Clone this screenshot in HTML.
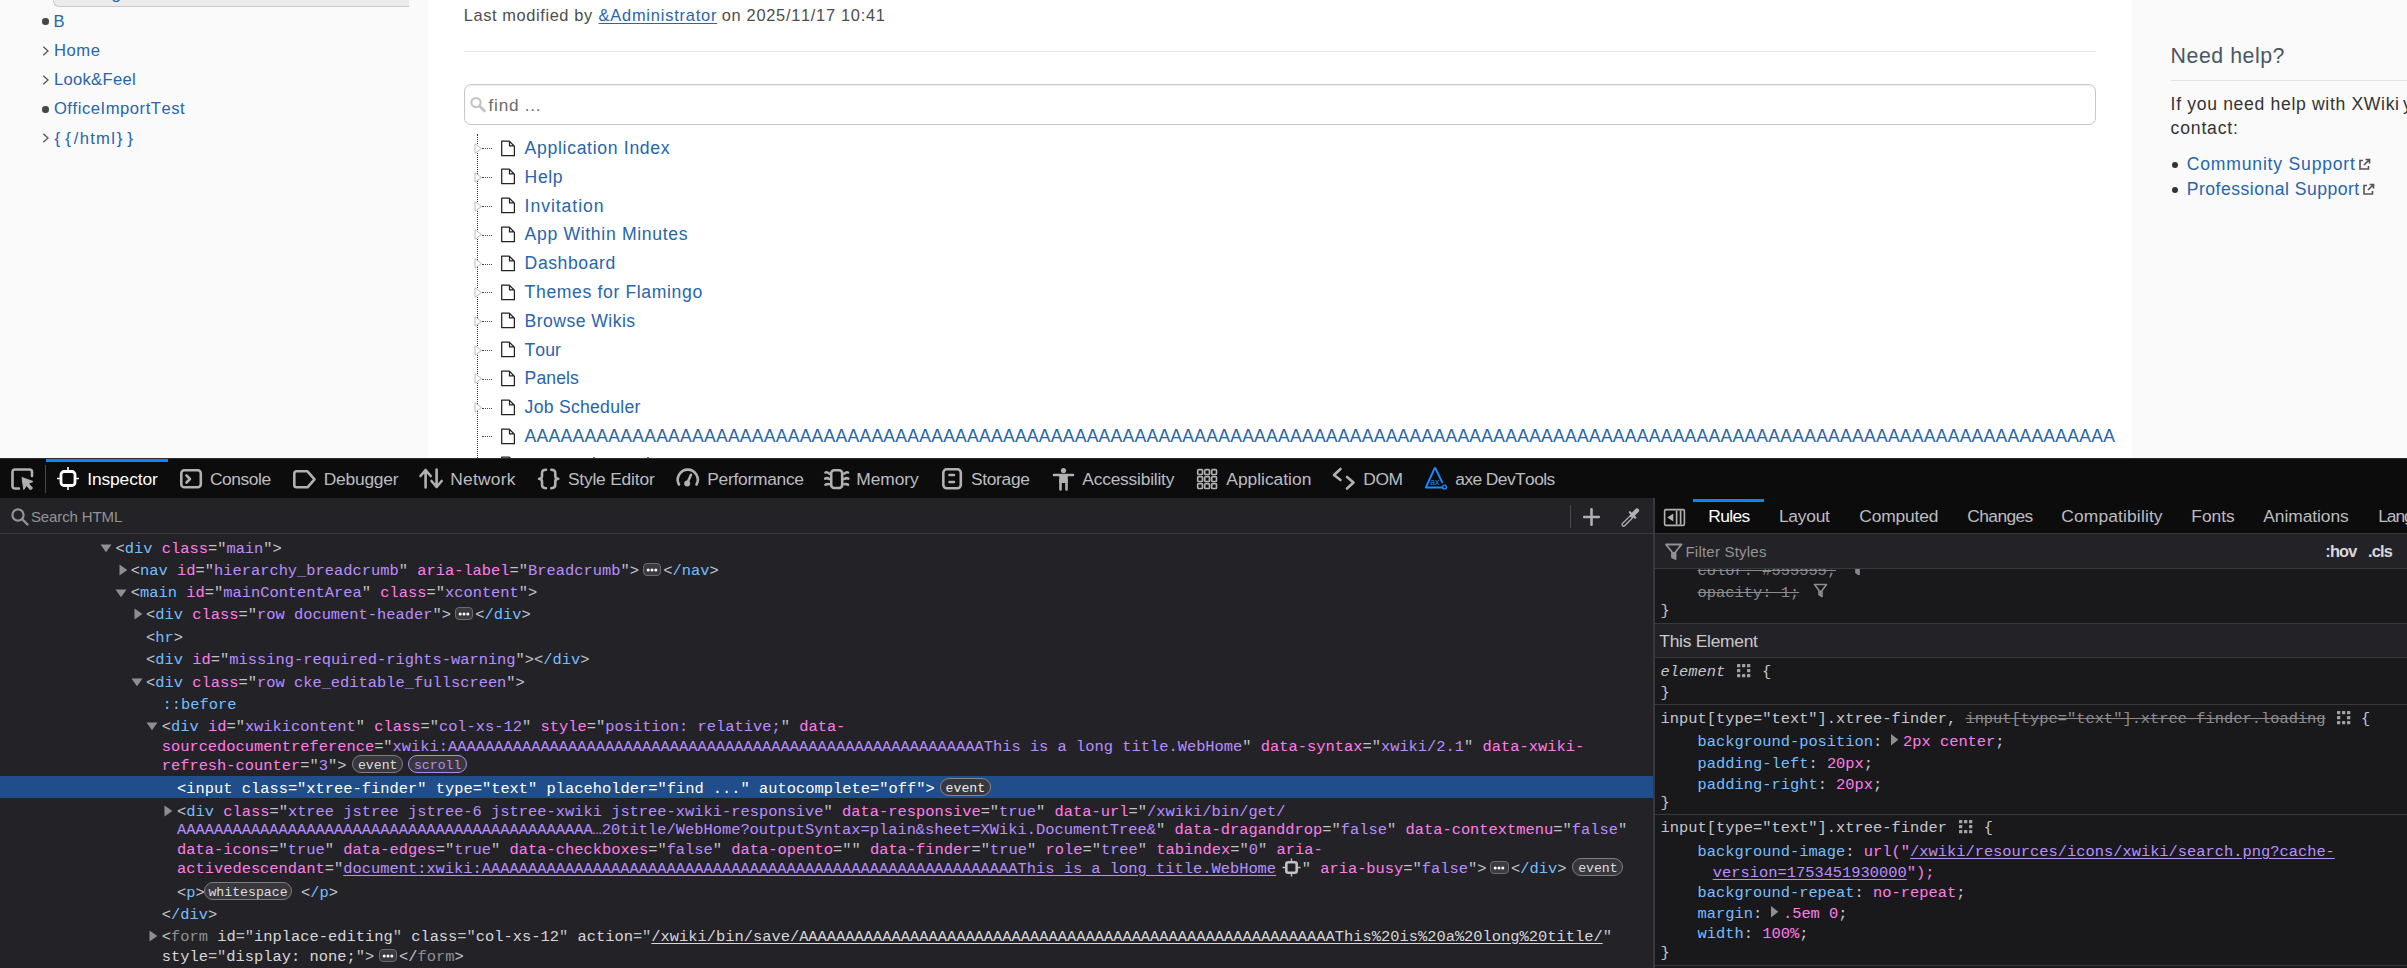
<!DOCTYPE html>
<html><head><meta charset="utf-8"><title>XWiki</title><style>
html,body{margin:0;padding:0;width:2407px;height:968px;overflow:hidden;background:#fff}
body{position:relative;font-family:"Liberation Sans",sans-serif;font-kerning:none}
.s{position:absolute;white-space:pre;line-height:30px;font-family:"Liberation Sans",sans-serif}
.m{position:absolute;white-space:pre;line-height:30px;font-family:"Liberation Mono",monospace;color:#c2c2c6}
svg{overflow:visible}
</style></head><body>
<div style="position:absolute;left:0px;top:0px;width:428px;height:458px;background:#fafafa"></div>
<div style="position:absolute;left:428px;top:0px;width:1704px;height:458px;background:#fff"></div>
<div style="position:absolute;left:2132px;top:0px;width:275px;height:458px;background:#fafafa"></div>
<div style="position:absolute;left:53px;top:-8px;width:355px;height:13px;background:#ebebeb;border:1px solid #c9c9c9;border-right:none;border-radius:0 0 0 6px"></div>
<div class="s" id="t1" style="left:111.50px;top:-21.00px;font-size:17px;color:#2865ab;">g</div>
<div style="position:absolute;left:42px;top:18.4px;width:6.5px;height:6.5px;background:#474747;border-radius:50%"></div>
<div class="s" id="t2" style="left:53.60px;top:7.00px;font-size:16.6px;color:#2865ab;">B</div>
<svg style="position:absolute;left:41px;top:44.6px" width="10" height="12"><polyline points="2.3,1.8 7,6 2.3,10.2" fill="none" stroke="#555" stroke-width="1.3"/></svg>
<div class="s" id="t3" style="left:53.90px;top:36.00px;font-size:16.6px;color:#2865ab;letter-spacing:0.634px;">Home</div>
<svg style="position:absolute;left:41px;top:73.9px" width="10" height="12"><polyline points="2.3,1.8 7,6 2.3,10.2" fill="none" stroke="#555" stroke-width="1.3"/></svg>
<div class="s" id="t4" style="left:53.90px;top:65.00px;font-size:16.6px;color:#2865ab;letter-spacing:0.306px;">Look&amp;Feel</div>
<div style="position:absolute;left:42px;top:106.1px;width:6.5px;height:6.5px;background:#474747;border-radius:50%"></div>
<div class="s" id="t5" style="left:53.90px;top:94.00px;font-size:16.6px;color:#2865ab;letter-spacing:0.547px;">OfficeImportTest</div>
<svg style="position:absolute;left:41px;top:132.3px" width="10" height="12"><polyline points="2.3,1.8 7,6 2.3,10.2" fill="none" stroke="#555" stroke-width="1.3"/></svg>
<div class="s" id="t6" style="left:54.60px;top:123.00px;font-size:17.200000000000003px;color:#2865ab;">{</div>
<div class="s" id="t7" style="left:65.20px;top:123.00px;font-size:17.200000000000003px;color:#2865ab;">{</div>
<div class="s" id="t8" style="left:116.80px;top:123.00px;font-size:17.200000000000003px;color:#2865ab;">}</div>
<div class="s" id="t9" style="left:127.20px;top:123.00px;font-size:17.200000000000003px;color:#2865ab;">}</div>
<div class="s" id="t10" style="left:73.80px;top:124.00px;font-size:16.6px;color:#2865ab;letter-spacing:1.286px;">/html</div>
<div class="s" id="t11" style="left:463.80px;top:0.00px;font-size:16.4px;color:#4d4d4d;letter-spacing:0.600px;">Last modified by </div>
<div class="s" id="t12" style="left:598.50px;top:0.00px;font-size:16.4px;color:#2865ab;letter-spacing:0.801px;text-decoration:underline;text-underline-offset:2px;">&amp;Administrator</div>
<div class="s" id="t13" style="left:721.70px;top:0.00px;font-size:16.4px;color:#4d4d4d;letter-spacing:0.711px;">on 2025/11/17 10:41</div>
<div style="position:absolute;left:464px;top:51px;width:1632px;height:1px;background:#e6e6e6"></div>
<div style="position:absolute;left:464px;top:84px;width:1630px;height:39px;border:1px solid #c8c8c8;border-radius:7px;box-shadow:inset 0 1px 1px rgba(0,0,0,.08);background:#fff"></div>
<svg style="position:absolute;left:469px;top:96px" width="18" height="17"><circle cx="7" cy="6.5" r="4.6" fill="none" stroke="#c2c2c2" stroke-width="2"/><line x1="10.5" y1="10" x2="15.5" y2="15" stroke="#c2c2c2" stroke-width="2.6" stroke-linecap="round"/></svg>
<div class="s" id="t14" style="left:488.60px;top:90.00px;font-size:17.2px;color:#6b6b6b;letter-spacing:0.723px;">find ...</div>
<div style="position:absolute;left:477px;top:134px;width:0;height:324px;border-left:1px dotted #333"></div>
<svg style="position:absolute;left:474px;top:143.0px" width="9" height="11"><polygon points="1,0.8 7.5,5.5 1,10.2" fill="#fff" stroke="#bdbdbd" stroke-width="1"/></svg>
<div style="position:absolute;left:482px;top:148px;width:10px;height:0;border-top:1px dotted #444"></div>
<svg style="position:absolute;left:500px;top:138.5px" width="17" height="19"><path d="M1.7,2.1 H9.3 L14.4,7.2 V16.7 H1.7 Z M9.5,2.1 V6.9 H14.4" fill="#fff" stroke="#222" stroke-width="1.25" stroke-linejoin="round"/></svg>
<div class="s" id="t15" style="left:524.60px;top:133.00px;font-size:17.6px;color:#2865ab;letter-spacing:0.688px;">Application Index</div>
<svg style="position:absolute;left:474px;top:171.8px" width="9" height="11"><polygon points="1,0.8 7.5,5.5 1,10.2" fill="#fff" stroke="#bdbdbd" stroke-width="1"/></svg>
<div style="position:absolute;left:482px;top:177px;width:10px;height:0;border-top:1px dotted #444"></div>
<svg style="position:absolute;left:500px;top:167.3px" width="17" height="19"><path d="M1.7,2.1 H9.3 L14.4,7.2 V16.7 H1.7 Z M9.5,2.1 V6.9 H14.4" fill="#fff" stroke="#222" stroke-width="1.25" stroke-linejoin="round"/></svg>
<div class="s" id="t16" style="left:524.60px;top:162.00px;font-size:17.6px;color:#2865ab;letter-spacing:0.578px;">Help</div>
<svg style="position:absolute;left:474px;top:200.6px" width="9" height="11"><polygon points="1,0.8 7.5,5.5 1,10.2" fill="#fff" stroke="#bdbdbd" stroke-width="1"/></svg>
<div style="position:absolute;left:482px;top:206px;width:10px;height:0;border-top:1px dotted #444"></div>
<svg style="position:absolute;left:500px;top:196.1px" width="17" height="19"><path d="M1.7,2.1 H9.3 L14.4,7.2 V16.7 H1.7 Z M9.5,2.1 V6.9 H14.4" fill="#fff" stroke="#222" stroke-width="1.25" stroke-linejoin="round"/></svg>
<div class="s" id="t17" style="left:524.60px;top:191.00px;font-size:17.6px;color:#2865ab;letter-spacing:0.948px;">Invitation</div>
<svg style="position:absolute;left:474px;top:229.4px" width="9" height="11"><polygon points="1,0.8 7.5,5.5 1,10.2" fill="#fff" stroke="#bdbdbd" stroke-width="1"/></svg>
<div style="position:absolute;left:482px;top:235px;width:10px;height:0;border-top:1px dotted #444"></div>
<svg style="position:absolute;left:500px;top:224.9px" width="17" height="19"><path d="M1.7,2.1 H9.3 L14.4,7.2 V16.7 H1.7 Z M9.5,2.1 V6.9 H14.4" fill="#fff" stroke="#222" stroke-width="1.25" stroke-linejoin="round"/></svg>
<div class="s" id="t18" style="left:524.60px;top:219.00px;font-size:17.6px;color:#2865ab;letter-spacing:0.668px;">App Within Minutes</div>
<svg style="position:absolute;left:474px;top:258.2px" width="9" height="11"><polygon points="1,0.8 7.5,5.5 1,10.2" fill="#fff" stroke="#bdbdbd" stroke-width="1"/></svg>
<div style="position:absolute;left:482px;top:264px;width:10px;height:0;border-top:1px dotted #444"></div>
<svg style="position:absolute;left:500px;top:253.7px" width="17" height="19"><path d="M1.7,2.1 H9.3 L14.4,7.2 V16.7 H1.7 Z M9.5,2.1 V6.9 H14.4" fill="#fff" stroke="#222" stroke-width="1.25" stroke-linejoin="round"/></svg>
<div class="s" id="t19" style="left:524.60px;top:248.00px;font-size:17.6px;color:#2865ab;letter-spacing:0.580px;">Dashboard</div>
<svg style="position:absolute;left:474px;top:287.0px" width="9" height="11"><polygon points="1,0.8 7.5,5.5 1,10.2" fill="#fff" stroke="#bdbdbd" stroke-width="1"/></svg>
<div style="position:absolute;left:482px;top:292px;width:10px;height:0;border-top:1px dotted #444"></div>
<svg style="position:absolute;left:500px;top:282.5px" width="17" height="19"><path d="M1.7,2.1 H9.3 L14.4,7.2 V16.7 H1.7 Z M9.5,2.1 V6.9 H14.4" fill="#fff" stroke="#222" stroke-width="1.25" stroke-linejoin="round"/></svg>
<div class="s" id="t20" style="left:524.60px;top:277.00px;font-size:17.6px;color:#2865ab;letter-spacing:0.635px;">Themes for Flamingo</div>
<svg style="position:absolute;left:474px;top:315.8px" width="9" height="11"><polygon points="1,0.8 7.5,5.5 1,10.2" fill="#fff" stroke="#bdbdbd" stroke-width="1"/></svg>
<div style="position:absolute;left:482px;top:321px;width:10px;height:0;border-top:1px dotted #444"></div>
<svg style="position:absolute;left:500px;top:311.3px" width="17" height="19"><path d="M1.7,2.1 H9.3 L14.4,7.2 V16.7 H1.7 Z M9.5,2.1 V6.9 H14.4" fill="#fff" stroke="#222" stroke-width="1.25" stroke-linejoin="round"/></svg>
<div class="s" id="t21" style="left:524.60px;top:306.00px;font-size:17.6px;color:#2865ab;letter-spacing:0.452px;">Browse Wikis</div>
<svg style="position:absolute;left:474px;top:344.6px" width="9" height="11"><polygon points="1,0.8 7.5,5.5 1,10.2" fill="#fff" stroke="#bdbdbd" stroke-width="1"/></svg>
<div style="position:absolute;left:482px;top:350px;width:10px;height:0;border-top:1px dotted #444"></div>
<svg style="position:absolute;left:500px;top:340.1px" width="17" height="19"><path d="M1.7,2.1 H9.3 L14.4,7.2 V16.7 H1.7 Z M9.5,2.1 V6.9 H14.4" fill="#fff" stroke="#222" stroke-width="1.25" stroke-linejoin="round"/></svg>
<div class="s" id="t22" style="left:524.60px;top:335.00px;font-size:17.6px;color:#2865ab;letter-spacing:0.003px;">Tour</div>
<svg style="position:absolute;left:474px;top:373.4px" width="9" height="11"><polygon points="1,0.8 7.5,5.5 1,10.2" fill="#fff" stroke="#bdbdbd" stroke-width="1"/></svg>
<div style="position:absolute;left:482px;top:379px;width:10px;height:0;border-top:1px dotted #444"></div>
<svg style="position:absolute;left:500px;top:368.9px" width="17" height="19"><path d="M1.7,2.1 H9.3 L14.4,7.2 V16.7 H1.7 Z M9.5,2.1 V6.9 H14.4" fill="#fff" stroke="#222" stroke-width="1.25" stroke-linejoin="round"/></svg>
<div class="s" id="t23" style="left:524.60px;top:363.00px;font-size:17.6px;color:#2865ab;letter-spacing:0.101px;">Panels</div>
<svg style="position:absolute;left:474px;top:402.2px" width="9" height="11"><polygon points="1,0.8 7.5,5.5 1,10.2" fill="#fff" stroke="#bdbdbd" stroke-width="1"/></svg>
<div style="position:absolute;left:482px;top:408px;width:10px;height:0;border-top:1px dotted #444"></div>
<svg style="position:absolute;left:500px;top:397.7px" width="17" height="19"><path d="M1.7,2.1 H9.3 L14.4,7.2 V16.7 H1.7 Z M9.5,2.1 V6.9 H14.4" fill="#fff" stroke="#222" stroke-width="1.25" stroke-linejoin="round"/></svg>
<div class="s" id="t24" style="left:524.60px;top:392.00px;font-size:17.6px;color:#2865ab;letter-spacing:0.270px;">Job Scheduler</div>
<div style="position:absolute;left:482px;top:436px;width:10px;height:0;border-top:1px dotted #444"></div>
<svg style="position:absolute;left:500px;top:426.5px" width="17" height="19"><path d="M1.7,2.1 H9.3 L14.4,7.2 V16.7 H1.7 Z M9.5,2.1 V6.9 H14.4" fill="#fff" stroke="#222" stroke-width="1.25" stroke-linejoin="round"/></svg>
<div class="s" id="t25" style="left:524.60px;top:421.00px;font-size:17.6px;color:#2865ab;letter-spacing:0.224px;">AAAAAAAAAAAAAAAAAAAAAAAAAAAAAAAAAAAAAAAAAAAAAAAAAAAAAAAAAAAAAAAAAAAAAAAAAAAAAAAAAAAAAAAAAAAAAAAAAAAAAAAAAAAAAAAAAAAAAAAAAAAAAAAAAAAAA</div>
<div style="position:absolute;left:482px;top:465px;width:10px;height:0;border-top:1px dotted #444"></div>
<svg style="position:absolute;left:500px;top:455.3px" width="17" height="19"><path d="M1.7,2.1 H9.3 L14.4,7.2 V16.7 H1.7 Z M9.5,2.1 V6.9 H14.4" fill="#fff" stroke="#222" stroke-width="1.25" stroke-linejoin="round"/></svg>
<div class="s" id="t26" style="left:524.60px;top:450.00px;font-size:17.6px;color:#2865ab;letter-spacing:2.070px;">AAAAAAAAAAAAAAAAAAAA</div>
<div style="position:absolute;left:593px;top:456.5px;width:1.6px;height:1.6px;background:#2865ab;border-radius:50%"></div>
<div style="position:absolute;left:647px;top:456.5px;width:1.6px;height:1.6px;background:#2865ab;border-radius:50%"></div>
<div class="s" id="t27" style="left:2170.60px;top:41.00px;font-size:21.3px;color:#4a5663;letter-spacing:0.545px;">Need help?</div>
<div style="position:absolute;left:2171px;top:80px;width:236px;height:1px;background:#e3e3e3"></div>
<div class="s" id="t28" style="left:2170.60px;top:89.00px;font-size:17.6px;color:#333;letter-spacing:0.662px;">If you need help with XWiki</div>
<div class="s" id="t29" style="left:2403.00px;top:89.00px;font-size:17.6px;color:#333;">you can</div>
<div class="s" id="t30" style="left:2170.60px;top:113.00px;font-size:17.6px;color:#333;letter-spacing:0.809px;">contact:</div>
<div style="position:absolute;left:2172px;top:161.5px;width:6.3px;height:6.3px;background:#333;border-radius:50%"></div>
<div class="s" id="t31" style="left:2186.80px;top:149.00px;font-size:17.6px;color:#2865ab;letter-spacing:0.789px;">Community Support</div>
<svg style="position:absolute;left:2358.0px;top:157.5px" width="13" height="13"><path d="M5,2.5 H2 V11 H10.5 V8" fill="none" stroke="#555" stroke-width="1.6"/><path d="M6,7 L11,2 M7.5,1.5 H11.5 V5.5" fill="none" stroke="#555" stroke-width="1.7"/></svg>
<div style="position:absolute;left:2172px;top:186.5px;width:6.3px;height:6.3px;background:#333;border-radius:50%"></div>
<div class="s" id="t32" style="left:2186.80px;top:174.00px;font-size:17.6px;color:#2865ab;letter-spacing:0.479px;">Professional Support</div>
<svg style="position:absolute;left:2362.0px;top:182.5px" width="13" height="13"><path d="M5,2.5 H2 V11 H10.5 V8" fill="none" stroke="#555" stroke-width="1.6"/><path d="M6,7 L11,2 M7.5,1.5 H11.5 V5.5" fill="none" stroke="#555" stroke-width="1.7"/></svg>
<div style="position:absolute;left:0px;top:458px;width:2407px;height:510px;background:#232327"></div>
<div style="position:absolute;left:0px;top:458px;width:2407px;height:40px;background:#0c0c0d"></div>
<div style="position:absolute;left:0px;top:458px;width:2407px;height:1px;background:#2b2b30"></div>
<div style="position:absolute;left:0px;top:498px;width:2407px;height:1px;background:#38383d"></div>
<div style="position:absolute;left:46px;top:459px;width:122px;height:3px;background:#0a84ff"></div>
<div style="position:absolute;left:45px;top:465px;width:1px;height:28px;background:#48484d"></div>
<div class="s" id="t33" style="left:87.30px;top:464.00px;font-size:17.4px;color:#ffffff;letter-spacing:-0.139px;">Inspector</div>
<div class="s" id="t34" style="left:210.00px;top:464.00px;font-size:17.4px;color:#bdbdc0;letter-spacing:-0.445px;">Console</div>
<div class="s" id="t35" style="left:323.80px;top:464.00px;font-size:17.4px;color:#bdbdc0;letter-spacing:-0.236px;">Debugger</div>
<div class="s" id="t36" style="left:450.30px;top:464.00px;font-size:17.4px;color:#bdbdc0;letter-spacing:0.231px;">Network</div>
<div class="s" id="t37" style="left:567.90px;top:464.00px;font-size:17.4px;color:#bdbdc0;letter-spacing:-0.195px;">Style Editor</div>
<div class="s" id="t38" style="left:707.30px;top:464.00px;font-size:17.4px;color:#bdbdc0;letter-spacing:-0.287px;">Performance</div>
<div class="s" id="t39" style="left:856.30px;top:464.00px;font-size:17.4px;color:#bdbdc0;letter-spacing:-0.069px;">Memory</div>
<div class="s" id="t40" style="left:970.90px;top:464.00px;font-size:17.4px;color:#bdbdc0;letter-spacing:-0.303px;">Storage</div>
<div class="s" id="t41" style="left:1082.30px;top:464.00px;font-size:17.4px;color:#bdbdc0;letter-spacing:-0.217px;">Accessibility</div>
<div class="s" id="t42" style="left:1226.30px;top:464.00px;font-size:17.4px;color:#bdbdc0;letter-spacing:-0.007px;">Application</div>
<div class="s" id="t43" style="left:1363.30px;top:464.00px;font-size:17.4px;color:#bdbdc0;letter-spacing:-0.393px;">DOM</div>
<div class="s" id="t44" style="left:1455.30px;top:464.00px;font-size:17.4px;color:#bdbdc0;letter-spacing:-0.577px;">axe DevTools</div>
<svg style="position:absolute;left:10px;top:467px" width="26" height="26" viewBox="0 0 26 26"><path d="M9,21.5 H5 Q2.5,21.5 2.5,19 V5 Q2.5,2.5 5,2.5 H19.5 Q22,2.5 22,5 V9" fill="none" stroke="#b1b1b3" stroke-width="2.6" stroke-linecap="round" stroke-linejoin="round"/><path d="M12,10.5 L23,14.5 L18.5,16.5 L22.5,21 L20.5,23 L16.5,18.5 L13.8,22.5 Z" fill="#b1b1b3" stroke="#b1b1b3" stroke-width="1" stroke-linejoin="round"/></svg>
<svg style="position:absolute;left:56px;top:466px" width="24" height="25" viewBox="0 0 24 25"><rect x="5" y="5.5" width="14" height="14" rx="3" fill="none" stroke="#fff" stroke-width="2.8"/><path d="M12,1 V5.5 M12,19.5 V24 M1,12.5 H5 M19,12.5 H23" stroke="#fff" stroke-width="1.6"/></svg>
<svg style="position:absolute;left:179px;top:468px" width="25" height="22" viewBox="0 0 25 22"><rect x="2.3" y="2.3" width="19.5" height="17" rx="3" fill="none" stroke="#b1b1b3" stroke-width="2.6" stroke-linecap="round" stroke-linejoin="round"/><path d="M7.5,7.5 L11,11 L7.5,14.5" fill="none" stroke="#b1b1b3" stroke-width="2.6" stroke-linecap="round" stroke-linejoin="round" stroke-width="2"/></svg>
<svg style="position:absolute;left:292px;top:469px" width="26" height="21" viewBox="0 0 26 21"><path d="M4.5,2.3 H15.5 L22.5,10.3 L15.5,18.3 H4.5 Q2.3,18.3 2.3,16 V4.6 Q2.3,2.3 4.5,2.3 Z" fill="none" stroke="#b1b1b3" stroke-width="2.6" stroke-linecap="round" stroke-linejoin="round"/></svg>
<svg style="position:absolute;left:419px;top:467px" width="25" height="23" viewBox="0 0 25 23"><path d="M6.6,20.5 V3 M1.5,9 L6.6,3 L11.7,9 M17.6,2.5 V20 M12.5,14 L17.6,20 L22.7,14" fill="none" stroke="#b1b1b3" stroke-width="2.6" stroke-linecap="round" stroke-linejoin="round" stroke-width="2.5"/></svg>
<svg style="position:absolute;left:537px;top:468px" width="25" height="22" viewBox="0 0 25 22"><path d="M9,1.7 Q5,1.7 5,5.2 V8.2 Q5,10.6 2,10.8 Q5,11 5,13.4 V16.6 Q5,20.2 9,20.2 M14.3,1.7 Q18.3,1.7 18.3,5.2 V8.2 Q18.3,10.6 21.3,10.8 Q18.3,11 18.3,13.4 V16.6 Q18.3,20.2 14.3,20.2" fill="none" stroke="#b1b1b3" stroke-width="2.6" stroke-linecap="round" stroke-linejoin="round" stroke-width="2.6"/></svg>
<svg style="position:absolute;left:675px;top:465px" width="26" height="24" viewBox="0 0 26 24"><path d="M4,19.5 A10,10 0 1 1 21.5,19.5" fill="none" stroke="#b1b1b3" stroke-width="2.6" stroke-linecap="round" stroke-linejoin="round"/><path d="M12.3,18 L16,9.8" fill="none" stroke="#b1b1b3" stroke-width="2.6" stroke-linecap="round" stroke-linejoin="round" stroke-width="1.7"/><circle cx="12.2" cy="18.6" r="3" fill="#b1b1b3"/></svg>
<svg style="position:absolute;left:824px;top:468px" width="26" height="22" viewBox="0 0 26 22"><rect x="7.2" y="2.2" width="11" height="17.8" rx="3" fill="none" stroke="#b1b1b3" stroke-width="2.6" stroke-linecap="round" stroke-linejoin="round"/><path d="M1.5,4.5 Q3,3.6 5.2,5.6 M1.2,10.6 Q3,9.4 5.2,11 M1.5,16.8 Q3,15.6 5.2,16.2 M24,4.5 Q22.5,3.6 20.3,5.6 M24.3,10.6 Q22.5,9.4 20.3,11 M24,16.8 Q22.5,15.6 20.3,16.2" fill="none" stroke="#b1b1b3" stroke-width="2.6" stroke-linecap="round" stroke-linejoin="round" stroke-width="1.6"/></svg>
<svg style="position:absolute;left:941px;top:467px" width="23" height="24" viewBox="0 0 23 24"><rect x="2.3" y="2.3" width="17.5" height="19" rx="3.5" fill="none" stroke="#b1b1b3" stroke-width="2.6" stroke-linecap="round" stroke-linejoin="round"/><path d="M8.5,8 H13 M8.5,15 H13" fill="none" stroke="#b1b1b3" stroke-width="2.6" stroke-linecap="round" stroke-linejoin="round" stroke-width="1.8"/></svg>
<svg style="position:absolute;left:1052px;top:467px" width="23" height="24" viewBox="0 0 23 24"><circle cx="11.5" cy="3.5" r="2.6" fill="#b1b1b3"/><path d="M2,8 H21 M11.5,8 V14 M8.5,13 V22.5 M14.5,13 V22.5" fill="none" stroke="#b1b1b3" stroke-width="2.6" stroke-linecap="round" stroke-linejoin="round" stroke-width="2.8" stroke-linecap="butt"/><rect x="7.2" y="8" width="8.6" height="8" fill="#b1b1b3"/></svg>
<svg style="position:absolute;left:1196px;top:468px" width="23" height="23" viewBox="0 0 23 23"><rect x="1.7" y="1.7" width="4.8" height="4.8" rx="1" fill="none" stroke="#b1b1b3" stroke-width="1.7"/><rect x="1.7" y="8.7" width="4.8" height="4.8" rx="1" fill="none" stroke="#b1b1b3" stroke-width="1.7"/><rect x="1.7" y="15.7" width="4.8" height="4.8" rx="1" fill="none" stroke="#b1b1b3" stroke-width="1.7"/><rect x="8.7" y="1.7" width="4.8" height="4.8" rx="1" fill="none" stroke="#b1b1b3" stroke-width="1.7"/><rect x="8.7" y="8.7" width="4.8" height="4.8" rx="1" fill="none" stroke="#b1b1b3" stroke-width="1.7"/><rect x="8.7" y="15.7" width="4.8" height="4.8" rx="1" fill="none" stroke="#b1b1b3" stroke-width="1.7"/><rect x="15.7" y="1.7" width="4.8" height="4.8" rx="1" fill="none" stroke="#b1b1b3" stroke-width="1.7"/><rect x="15.7" y="8.7" width="4.8" height="4.8" rx="1" fill="none" stroke="#b1b1b3" stroke-width="1.7"/><rect x="15.7" y="15.7" width="4.8" height="4.8" rx="1" fill="none" stroke="#b1b1b3" stroke-width="1.7"/></svg>
<svg style="position:absolute;left:1332px;top:467px" width="25" height="24" viewBox="0 0 25 24"><path d="M8.5,2 L2,8 L8.5,13 M15,10 L21.5,15.5 L15,21.5" fill="none" stroke="#b1b1b3" stroke-width="2.6" stroke-linecap="round" stroke-linejoin="round" stroke-width="2.6"/></svg>
<svg style="position:absolute;left:1424px;top:466px" width="26" height="25" viewBox="0 0 26 25"><path d="M11,1.5 L1.8,21.5 H18.5" fill="none" stroke="#1a8cff" stroke-width="1.8" stroke-linejoin="round"/><path d="M11,1.5 L18.5,17" fill="none" stroke="#1a8cff" stroke-width="1.8"/><circle cx="20.5" cy="21" r="1.9" fill="none" stroke="#1a8cff" stroke-width="1.4"/><text x="6.3" y="19" font-family="Liberation Sans" font-size="8.5" fill="#1a8cff">ax</text></svg>
<div style="position:absolute;left:0px;top:498px;width:1653px;height:35px;background:#232327"></div>
<div style="position:absolute;left:0px;top:533px;width:1653px;height:1px;background:#38383d"></div>
<svg style="position:absolute;left:10px;top:507px" width="20" height="20" viewBox="0 0 20 20"><circle cx="8" cy="8" r="5.6" fill="none" stroke="#939395" stroke-width="2.2"/><path d="M12,12 L17.5,17.5" stroke="#939395" stroke-width="2.4" stroke-linecap="round"/></svg>
<div class="s" id="t45" style="left:30.90px;top:502.00px;font-size:15px;color:#939395;letter-spacing:-0.112px;">Search HTML</div>
<div style="position:absolute;left:1570px;top:505px;width:1px;height:23px;background:#48484d"></div>
<svg style="position:absolute;left:1581px;top:506px" width="21" height="21" viewBox="0 0 21 21"><path d="M10.5,3.2 V18.8 M3.2,11 H17.8" stroke="#b1b1b3" stroke-width="2.6" stroke-linecap="round"/></svg>
<svg style="position:absolute;left:1620px;top:505px" width="23" height="23" viewBox="0 0 23 23"><path d="M3.6,19.6 L11,12.2" stroke="#b1b1b3" stroke-width="4.4" stroke-linecap="round"/><path d="M3.6,19.6 L11,12.2" stroke="#232327" stroke-width="1.8" stroke-linecap="round"/><path d="M12,10.6 L17,5.6" stroke="#b1b1b3" stroke-width="4.2" stroke-linecap="round"/><path d="M9.8,7.2 L15.3,12.7" stroke="#b1b1b3" stroke-width="2.2" stroke-linecap="round"/></svg>
<div style="position:absolute;left:1653px;top:498px;width:2px;height:470px;background:#38383d"></div>
<div style="position:absolute;left:1655px;top:498px;width:752px;height:35px;background:#0c0c0d"></div>
<div style="position:absolute;left:1655px;top:533px;width:752px;height:1px;background:#38383d"></div>
<div style="position:absolute;left:1655px;top:534px;width:752px;height:34px;background:#232327"></div>
<div style="position:absolute;left:1655px;top:568px;width:752px;height:1px;background:#38383d"></div>
<div style="position:absolute;left:1655px;top:569px;width:752px;height:399px;background:#19191c"></div>
<div style="position:absolute;left:1693px;top:499px;width:71px;height:3px;background:#0a84ff"></div>
<svg style="position:absolute;left:1663px;top:508px" width="24" height="19" viewBox="0 0 24 19"><rect x="1.6" y="1.6" width="19.8" height="15.8" rx="1.5" fill="none" stroke="#b1b1b3" stroke-width="1.6"/><path d="M13.6,2.5 V16.5 M17.6,2.5 V16.5" stroke="#b1b1b3" stroke-width="1.7"/><path d="M10.3,5.6 L4.3,9.5 L10.3,13.4 Z" fill="#b1b1b3"/></svg>
<div class="s" id="t46" style="left:1708.30px;top:501.00px;font-size:17.4px;color:#ffffff;letter-spacing:-0.614px;">Rules</div>
<div class="s" id="t47" style="left:1778.90px;top:501.00px;font-size:17.4px;color:#bdbdc0;letter-spacing:-0.236px;">Layout</div>
<div class="s" id="t48" style="left:1859.30px;top:501.00px;font-size:17.4px;color:#bdbdc0;letter-spacing:-0.169px;">Computed</div>
<div class="s" id="t49" style="left:1967.30px;top:501.00px;font-size:17.4px;color:#bdbdc0;letter-spacing:-0.604px;">Changes</div>
<div class="s" id="t50" style="left:2061.30px;top:501.00px;font-size:17.4px;color:#bdbdc0;letter-spacing:0.143px;">Compatibility</div>
<div class="s" id="t51" style="left:2191.30px;top:501.00px;font-size:17.4px;color:#bdbdc0;letter-spacing:-0.020px;">Fonts</div>
<div class="s" id="t52" style="left:2263.30px;top:501.00px;font-size:17.4px;color:#bdbdc0;letter-spacing:-0.063px;">Animations</div>
<div class="s" id="t53" style="left:2378.30px;top:501.00px;font-size:17.4px;color:#bdbdc0;letter-spacing:-1.1px;">Languages</div>
<svg style="position:absolute;left:1664px;top:542px" width="20" height="20" viewBox="0 0 20 20"><path d="M2,2.5 H17.5 L11.5,10 V17 L8,15.5 V10 Z" fill="none" stroke="#939395" stroke-width="1.8" stroke-linejoin="round"/><path d="M8.5,10 V15 L11,16 V10 Z" fill="#939395"/></svg>
<div class="s" id="t54" style="left:1685.50px;top:537.00px;font-size:15px;color:#939395;letter-spacing:0.211px;">Filter Styles</div>
<div class="s" id="t55" style="left:2325.30px;top:536.00px;font-size:16.4px;color:#d7d7db;letter-spacing:-0.852px;font-weight:700;">:hov</div>
<div class="s" id="t56" style="left:2368.00px;top:536.00px;font-size:16.4px;color:#d7d7db;letter-spacing:-0.811px;font-weight:700;">.cls</div>
<div style="position:absolute;left:0px;top:776px;width:1653px;height:22px;background:#204e8a"></div>
<div class="m" style="left:115.50px;top:534px;font-size:15.4px;"><span style="color:#c2c2c6">&lt;</span><span style="color:#75bfff">div</span><span style="color:#c2c2c6"> </span><span style="color:#ff7de9">class</span><span style="color:#c2c2c6">=&quot;</span><span style="color:#b98eff">main</span><span style="color:#c2c2c6">&quot;</span><span style="color:#c2c2c6">&gt;</span></div>
<svg style="position:absolute;left:100px;top:543.5px" width="12" height="9" viewBox="0 0 12 9"><polygon points="0.5,0.5 11.5,0.5 6,8.3" fill="#8f8f93"/></svg>
<div class="m" style="left:130.80px;top:556px;font-size:15.4px;"><span style="color:#c2c2c6">&lt;</span><span style="color:#75bfff">nav</span><span style="color:#c2c2c6"> </span><span style="color:#ff7de9">id</span><span style="color:#c2c2c6">=&quot;</span><span style="color:#b98eff">hierarchy_breadcrumb</span><span style="color:#c2c2c6">&quot;</span><span style="color:#c2c2c6"> </span><span style="color:#ff7de9">aria-label</span><span style="color:#c2c2c6">=&quot;</span><span style="color:#b98eff">Breadcrumb</span><span style="color:#c2c2c6">&quot;</span><span style="color:#c2c2c6">&gt;</span><span style="display:inline-block;width:24.3px;height:1px;position:relative"><span style="position:absolute;left:3.8px;top:-11px;width:16.5px;height:11px;border:1px solid #6b6b70;border-radius:4px;background:#3a3a3f"><svg style="position:absolute;left:2px;top:3.5px" width="12" height="4"><circle cx="2.2" cy="2" r="1.5" fill="#fff"/><circle cx="6" cy="2" r="1.5" fill="#fff"/><circle cx="9.8" cy="2" r="1.5" fill="#fff"/></svg></span></span><span style="color:#c2c2c6">&lt;</span><span style="color:#75bfff">/nav</span><span style="color:#c2c2c6">&gt;</span></div>
<svg style="position:absolute;left:118.5px;top:564px" width="9" height="12" viewBox="0 0 9 12"><polygon points="0.5,0.5 8.3,6 0.5,11.5" fill="#8f8f93"/></svg>
<div class="m" style="left:130.80px;top:578px;font-size:15.4px;"><span style="color:#c2c2c6">&lt;</span><span style="color:#75bfff">main</span><span style="color:#c2c2c6"> </span><span style="color:#ff7de9">id</span><span style="color:#c2c2c6">=&quot;</span><span style="color:#b98eff">mainContentArea</span><span style="color:#c2c2c6">&quot;</span><span style="color:#c2c2c6"> </span><span style="color:#ff7de9">class</span><span style="color:#c2c2c6">=&quot;</span><span style="color:#b98eff">xcontent</span><span style="color:#c2c2c6">&quot;</span><span style="color:#c2c2c6">&gt;</span></div>
<svg style="position:absolute;left:115px;top:588.5px" width="12" height="9" viewBox="0 0 12 9"><polygon points="0.5,0.5 11.5,0.5 6,8.3" fill="#8f8f93"/></svg>
<div class="m" style="left:146.10px;top:600px;font-size:15.4px;"><span style="color:#c2c2c6">&lt;</span><span style="color:#75bfff">div</span><span style="color:#c2c2c6"> </span><span style="color:#ff7de9">class</span><span style="color:#c2c2c6">=&quot;</span><span style="color:#b98eff">row document-header</span><span style="color:#c2c2c6">&quot;</span><span style="color:#c2c2c6">&gt;</span><span style="display:inline-block;width:24.3px;height:1px;position:relative"><span style="position:absolute;left:3.8px;top:-11px;width:16.5px;height:11px;border:1px solid #6b6b70;border-radius:4px;background:#3a3a3f"><svg style="position:absolute;left:2px;top:3.5px" width="12" height="4"><circle cx="2.2" cy="2" r="1.5" fill="#fff"/><circle cx="6" cy="2" r="1.5" fill="#fff"/><circle cx="9.8" cy="2" r="1.5" fill="#fff"/></svg></span></span><span style="color:#c2c2c6">&lt;</span><span style="color:#75bfff">/div</span><span style="color:#c2c2c6">&gt;</span></div>
<svg style="position:absolute;left:133.8px;top:608px" width="9" height="12" viewBox="0 0 9 12"><polygon points="0.5,0.5 8.3,6 0.5,11.5" fill="#8f8f93"/></svg>
<div class="m" style="left:146.10px;top:623px;font-size:15.4px;"><span style="color:#c2c2c6">&lt;</span><span style="color:#75bfff">hr</span><span style="color:#c2c2c6">&gt;</span></div>
<div class="m" style="left:146.10px;top:645px;font-size:15.4px;"><span style="color:#c2c2c6">&lt;</span><span style="color:#75bfff">div</span><span style="color:#c2c2c6"> </span><span style="color:#ff7de9">id</span><span style="color:#c2c2c6">=&quot;</span><span style="color:#b98eff">missing-required-rights-warning</span><span style="color:#c2c2c6">&quot;</span><span style="color:#c2c2c6">&gt;</span><span style="color:#c2c2c6">&lt;</span><span style="color:#75bfff">/div</span><span style="color:#c2c2c6">&gt;</span></div>
<div class="m" style="left:146.10px;top:668px;font-size:15.4px;"><span style="color:#c2c2c6">&lt;</span><span style="color:#75bfff">div</span><span style="color:#c2c2c6"> </span><span style="color:#ff7de9">class</span><span style="color:#c2c2c6">=&quot;</span><span style="color:#b98eff">row cke_editable_fullscreen</span><span style="color:#c2c2c6">&quot;</span><span style="color:#c2c2c6">&gt;</span></div>
<svg style="position:absolute;left:131px;top:677.5px" width="12" height="9" viewBox="0 0 12 9"><polygon points="0.5,0.5 11.5,0.5 6,8.3" fill="#8f8f93"/></svg>
<div class="m" style="left:162.50px;top:690px;font-size:15.4px;"><span style="color:#75bfff">::before</span></div>
<div class="m" style="left:161.70px;top:712px;font-size:15.4px;"><span style="color:#c2c2c6">&lt;</span><span style="color:#75bfff">div</span><span style="color:#c2c2c6"> </span><span style="color:#ff7de9">id</span><span style="color:#c2c2c6">=&quot;</span><span style="color:#b98eff">xwikicontent</span><span style="color:#c2c2c6">&quot;</span><span style="color:#c2c2c6"> </span><span style="color:#ff7de9">class</span><span style="color:#c2c2c6">=&quot;</span><span style="color:#b98eff">col-xs-12</span><span style="color:#c2c2c6">&quot;</span><span style="color:#c2c2c6"> </span><span style="color:#ff7de9">style</span><span style="color:#c2c2c6">=&quot;</span><span style="color:#b98eff">position: relative;</span><span style="color:#c2c2c6">&quot;</span><span style="color:#c2c2c6"></span><span style="color:#c2c2c6"> </span><span style="color:#ff7de9">data-</span></div>
<svg style="position:absolute;left:146.3px;top:722px" width="12" height="9" viewBox="0 0 12 9"><polygon points="0.5,0.5 11.5,0.5 6,8.3" fill="#8f8f93"/></svg>
<div class="m" style="left:161.70px;top:732px;font-size:15.4px;"><span style="color:#ff7de9">sourcedocumentreference</span><span style="color:#c2c2c6">=&quot;</span><span style="color:#b98eff">xwiki:AAAAAAAAAAAAAAAAAAAAAAAAAAAAAAAAAAAAAAAAAAAAAAAAAAAAAAAAAAThis is a long title.WebHome</span><span style="color:#c2c2c6">&quot;</span><span style="color:#c2c2c6"> </span><span style="color:#ff7de9">data-syntax</span><span style="color:#c2c2c6">=&quot;</span><span style="color:#b98eff">xwiki/2.1</span><span style="color:#c2c2c6">&quot;</span><span style="color:#c2c2c6"> </span><span style="color:#ff7de9">data-xwiki-</span></div>
<div class="m" style="left:161.70px;top:751px;font-size:15.4px;"><span style="color:#ff7de9">refresh-counter</span><span style="color:#c2c2c6">=&quot;</span><span style="color:#b98eff">3</span><span style="color:#c2c2c6">&quot;&gt;</span><span style="display:inline-block;width:56.5px;height:1px;position:relative"><span style="position:absolute;left:6px;top:0"><span style="position:absolute;left:0;top:-14.5px;width:48.5px;height:16.5px;border:1px solid #7d7d82;border-radius:9px;background:#37373c;color:#dedee0;font-size:13.2px;line-height:20.0px;text-align:center">event</span></span></span><span style="display:inline-block;width:64.2px;height:1px;position:relative"><span style="position:absolute;left:5.2px;top:0"><span style="position:absolute;left:0;top:-14.5px;width:57px;height:16.5px;border:1px solid #b18aff;border-radius:9px;background:#37373c;color:#b98eff;font-size:13.2px;line-height:20.0px;text-align:center">scroll</span></span></span></div>
<div class="m" style="left:177.00px;top:774px;font-size:15.4px;"><span style="color:#ffffff">&lt;</span><span style="color:#ffffff">input</span><span style="color:#ffffff"> </span><span style="color:#ffffff">class</span><span style="color:#ffffff">=&quot;</span><span style="color:#ffffff">xtree-finder</span><span style="color:#ffffff">&quot;</span><span style="color:#ffffff"> </span><span style="color:#ffffff">type</span><span style="color:#ffffff">=&quot;</span><span style="color:#ffffff">text</span><span style="color:#ffffff">&quot;</span><span style="color:#ffffff"> </span><span style="color:#ffffff">placeholder</span><span style="color:#ffffff">=&quot;</span><span style="color:#ffffff">find ...</span><span style="color:#ffffff">&quot;</span><span style="color:#ffffff"> </span><span style="color:#ffffff">autocomplete</span><span style="color:#ffffff">=&quot;</span><span style="color:#ffffff">off</span><span style="color:#ffffff">&quot;</span><span style="color:#ffffff">&gt;</span><span style="display:inline-block;width:56.0px;height:1px;position:relative"><span style="position:absolute;left:5.5px;top:0"><span style="position:absolute;left:0;top:-14px;width:48.5px;height:16px;border:1px solid #8a8585;border-radius:9px;background:#37373c;color:#f0f0f0;font-size:13.2px;line-height:20.5px;text-align:center">event</span></span></span></div>
<div class="m" style="left:177.00px;top:797px;font-size:15.4px;"><span style="color:#c2c2c6">&lt;</span><span style="color:#75bfff">div</span><span style="color:#c2c2c6"> </span><span style="color:#ff7de9">class</span><span style="color:#c2c2c6">=&quot;</span><span style="color:#b98eff">xtree jstree jstree-6 jstree-xwiki jstree-xwiki-responsive</span><span style="color:#c2c2c6">&quot;</span><span style="color:#c2c2c6"> </span><span style="color:#ff7de9">data-responsive</span><span style="color:#c2c2c6">=&quot;</span><span style="color:#b98eff">true</span><span style="color:#c2c2c6">&quot;</span><span style="color:#c2c2c6"></span><span style="color:#c2c2c6"> </span><span style="color:#ff7de9">data-url</span><span style="color:#c2c2c6">=&quot;</span><span style="color:#b98eff">/xwiki/bin/get/</span></div>
<svg style="position:absolute;left:164px;top:804.5px" width="9" height="12" viewBox="0 0 9 12"><polygon points="0.5,0.5 8.3,6 0.5,11.5" fill="#8f8f93"/></svg>
<div class="m" style="left:177.00px;top:815px;font-size:15.4px;"><span style="color:#b98eff">AAAAAAAAAAAAAAAAAAAAAAAAAAAAAAAAAAAAAAAAAAAAA…20title/WebHome?outputSyntax=plain&amp;sheet=XWiki.DocumentTree&amp;</span><span style="color:#c2c2c6">&quot;</span><span style="color:#c2c2c6"> </span><span style="color:#ff7de9">data-draganddrop</span><span style="color:#c2c2c6">=&quot;</span><span style="color:#b98eff">false</span><span style="color:#c2c2c6">&quot;</span><span style="color:#c2c2c6"> </span><span style="color:#ff7de9">data-contextmenu</span><span style="color:#c2c2c6">=&quot;</span><span style="color:#b98eff">false</span><span style="color:#c2c2c6">&quot;</span></div>
<div class="m" style="left:177.00px;top:835px;font-size:15.4px;"><span style="color:#ff7de9">data-icons</span><span style="color:#c2c2c6">=&quot;</span><span style="color:#b98eff">true</span><span style="color:#c2c2c6">&quot;</span><span style="color:#c2c2c6"> </span><span style="color:#ff7de9">data-edges</span><span style="color:#c2c2c6">=&quot;</span><span style="color:#b98eff">true</span><span style="color:#c2c2c6">&quot;</span><span style="color:#c2c2c6"> </span><span style="color:#ff7de9">data-checkboxes</span><span style="color:#c2c2c6">=&quot;</span><span style="color:#b98eff">false</span><span style="color:#c2c2c6">&quot;</span><span style="color:#c2c2c6"> </span><span style="color:#ff7de9">data-opento</span><span style="color:#c2c2c6">=&quot;</span><span style="color:#b98eff"></span><span style="color:#c2c2c6">&quot;</span><span style="color:#c2c2c6"> </span><span style="color:#ff7de9">data-finder</span><span style="color:#c2c2c6">=&quot;</span><span style="color:#b98eff">true</span><span style="color:#c2c2c6">&quot;</span><span style="color:#c2c2c6"> </span><span style="color:#ff7de9">role</span><span style="color:#c2c2c6">=&quot;</span><span style="color:#b98eff">tree</span><span style="color:#c2c2c6">&quot;</span><span style="color:#c2c2c6"> </span><span style="color:#ff7de9">tabindex</span><span style="color:#c2c2c6">=&quot;</span><span style="color:#b98eff">0</span><span style="color:#c2c2c6">&quot;</span><span style="color:#c2c2c6"> </span><span style="color:#ff7de9">aria-</span></div>
<div class="m" style="left:177.00px;top:854px;font-size:15.4px;"><span style="color:#ff7de9">activedescendant</span><span style="color:#c2c2c6">=&quot;</span><span style="color:#b98eff;text-decoration:underline;text-underline-offset:2px">document:xwiki:AAAAAAAAAAAAAAAAAAAAAAAAAAAAAAAAAAAAAAAAAAAAAAAAAAAAAAAAAAThis is a long title.WebHome</span><span style="display:inline-block;width:25.6px;height:1px;position:relative"><svg style="position:absolute;left:5.6px;top:-14.5px" width="19" height="19"><rect x="4.3" y="4.3" width="10.4" height="10.4" rx="2" fill="none" stroke="#c2c2c6" stroke-width="2.6"/><path d="M9.5,0.5 V4 M9.5,15 V18.5 M0.5,9.5 H4 M15,9.5 H18.5" stroke="#c2c2c6" stroke-width="1.4"/></svg></span><span style="color:#c2c2c6">&quot;</span><span style="color:#c2c2c6"> </span><span style="color:#ff7de9">aria-busy</span><span style="color:#c2c2c6">=&quot;</span><span style="color:#b98eff">false</span><span style="color:#c2c2c6">&quot;&gt;</span><span style="display:inline-block;width:24.5px;height:1px;position:relative"><span style="position:absolute;left:4px;top:-11px;width:16.5px;height:11px;border:1px solid #6b6b70;border-radius:4px;background:#3a3a3f"><svg style="position:absolute;left:2px;top:3.5px" width="12" height="4"><circle cx="2.2" cy="2" r="1.5" fill="#fff"/><circle cx="6" cy="2" r="1.5" fill="#fff"/><circle cx="9.8" cy="2" r="1.5" fill="#fff"/></svg></span></span><span style="color:#c2c2c6">&lt;</span><span style="color:#75bfff">/div</span><span style="color:#c2c2c6">&gt;</span><span style="display:inline-block;width:57px;height:1px;position:relative"><span style="position:absolute;left:6px;top:0"><span style="position:absolute;left:0;top:-14.5px;width:49px;height:16.5px;border:1px solid #7d7d82;border-radius:9px;background:#37373c;color:#dedee0;font-size:13.2px;line-height:20.0px;text-align:center">event</span></span></span></div>
<div class="m" style="left:177.00px;top:878px;font-size:15.4px;"><span style="color:#c2c2c6">&lt;</span><span style="color:#75bfff">p</span><span style="color:#c2c2c6">&gt;</span><span style="display:inline-block;width:87.0px;height:1px;position:relative"><span style="position:absolute;left:-0.5px;top:0"><span style="position:absolute;left:0;top:-14.5px;width:85.5px;height:16.5px;border:1px solid #7d7d82;border-radius:9px;background:#37373c;color:#dedee0;font-size:13.2px;line-height:20.0px;text-align:center">whitespace</span></span></span><span style="color:#c2c2c6"> </span><span style="color:#c2c2c6">&lt;</span><span style="color:#75bfff">/p</span><span style="color:#c2c2c6">&gt;</span></div>
<div class="m" style="left:161.70px;top:900px;font-size:15.4px;"><span style="color:#c2c2c6">&lt;</span><span style="color:#75bfff">/div</span><span style="color:#c2c2c6">&gt;</span></div>
<div class="m" style="left:161.70px;top:922px;font-size:15.4px;"><span style="color:#c2c2c6">&lt;</span><span style="color:#8f8f93">form</span><span style="color:#c2c2c6"> </span><span style="color:#d7d7db">id</span><span style="color:#c2c2c6">=&quot;</span><span style="color:#d7d7db">inplace-editing</span><span style="color:#c2c2c6">&quot;</span><span style="color:#c2c2c6"> </span><span style="color:#d7d7db">class</span><span style="color:#c2c2c6">=&quot;</span><span style="color:#d7d7db">col-xs-12</span><span style="color:#c2c2c6">&quot;</span><span style="color:#c2c2c6"> </span><span style="color:#d7d7db">action</span><span style="color:#c2c2c6">=&quot;</span><span style="color:#d7d7db;text-decoration:underline;text-underline-offset:2px">/xwiki/bin/save/AAAAAAAAAAAAAAAAAAAAAAAAAAAAAAAAAAAAAAAAAAAAAAAAAAAAAAAAAAThis%20is%20a%20long%20title/</span><span style="color:#c2c2c6">&quot;</span></div>
<svg style="position:absolute;left:148.5px;top:930px" width="9" height="12" viewBox="0 0 9 12"><polygon points="0.5,0.5 8.3,6 0.5,11.5" fill="#8f8f93"/></svg>
<div class="m" style="left:161.70px;top:942px;font-size:15.4px;"><span style="color:#d7d7db">style</span><span style="color:#c2c2c6">=&quot;</span><span style="color:#d7d7db">display: none;</span><span style="color:#c2c2c6">&quot;</span><span style="color:#c2c2c6">&gt;</span><span style="display:inline-block;width:24.799999999999997px;height:1px;position:relative"><span style="position:absolute;left:4.4px;top:-11px;width:16.5px;height:11px;border:1px solid #6b6b70;border-radius:4px;background:#3a3a3f"><svg style="position:absolute;left:2px;top:3.5px" width="12" height="4"><circle cx="2.2" cy="2" r="1.5" fill="#fff"/><circle cx="6" cy="2" r="1.5" fill="#fff"/><circle cx="9.8" cy="2" r="1.5" fill="#fff"/></svg></span></span><span style="color:#c2c2c6">&lt;/</span><span style="color:#8f8f93">form</span><span style="color:#c2c2c6">&gt;</span></div>
<div style="position:absolute;left:0;top:0;width:2407px;height:968px;clip-path:inset(569px 0 0 1655px)">
<div class="m" style="left:1697.56px;top:556px;font-size:15.4px;"><span style="color:#8c8c90;text-decoration:line-through">color: #555555;</span><span style="display:inline-block;width:30px;height:1px;position:relative"><svg style="position:absolute;left:14px;top:-13px" width="15" height="15"><path d="M1.5,1.5 H13.5 L9,7.5 V13.5 L6,11.5 V7.5 Z" fill="none" stroke="#8c8c90" stroke-width="1.6" stroke-linejoin="round"/><path d="M6.3,7.5 V11.3 L8.7,12.8 V7.5 Z" fill="#8c8c90"/></svg></span></div>
<div class="m" style="left:1697.56px;top:578px;font-size:15.4px;"><span style="color:#8c8c90;text-decoration:line-through">opacity: 1;</span><span style="display:inline-block;width:30px;height:1px;position:relative"><svg style="position:absolute;left:14px;top:-13px" width="15" height="15"><path d="M1.5,1.5 H13.5 L9,7.5 V13.5 L6,11.5 V7.5 Z" fill="none" stroke="#8c8c90" stroke-width="1.6" stroke-linejoin="round"/><path d="M6.3,7.5 V11.3 L8.7,12.8 V7.5 Z" fill="#8c8c90"/></svg></span></div>
<div class="m" style="left:1660.60px;top:596px;font-size:15.4px;"><span style="color:#c6c6ca">}</span></div>
</div>
<div style="position:absolute;left:1655px;top:623px;width:752px;height:1px;background:#38383d"></div>
<div style="position:absolute;left:1655px;top:624px;width:752px;height:33px;background:#232327"></div>
<div style="position:absolute;left:1655px;top:657px;width:752px;height:1px;background:#38383d"></div>
<div class="s" id="t57" style="left:1659.30px;top:626.00px;font-size:17.4px;color:#c9c9cc;letter-spacing:-0.257px;">This Element</div>
<div class="m" style="left:1660.60px;top:657px;font-size:15.4px;"><span style="color:#c6c6ca;font-style:italic">element</span><span style="display:inline-block;width:36.7px;height:1px;position:relative"><svg style="position:absolute;left:11.8px;top:-11px" width="14" height="14"><g fill="#a2a2a6"><rect x="0" y="0" width="3.3" height="3.3" rx="0.6"/><rect x="5" y="0" width="3.3" height="3.3" rx="0.6"/><rect x="10" y="0" width="3.3" height="3.3" rx="0.6"/><rect x="0" y="5" width="3.3" height="3.3" rx="0.6"/><rect x="10" y="5" width="3.3" height="3.3" rx="0.6"/><rect x="0" y="10" width="3.3" height="3.3" rx="0.6"/><rect x="5" y="10" width="3.3" height="3.3" rx="0.6"/><rect x="10" y="10" width="3.3" height="3.3" rx="0.6"/></g></svg></span><span style="color:#c6c6ca">{</span></div>
<div class="m" style="left:1660.60px;top:678px;font-size:15.4px;"><span style="color:#c6c6ca">}</span></div>
<div style="position:absolute;left:1655px;top:704px;width:752px;height:1px;background:#38383d"></div>
<div class="m" style="left:1660.60px;top:704px;font-size:15.4px;"><span style="color:#c6c6ca">input[type=&quot;text&quot;].xtree-finder, </span><span style="color:#8c8c90;text-decoration:line-through">input[type=&quot;text&quot;].xtree-finder.loading</span><span style="display:inline-block;width:35.4px;height:1px;position:relative"><svg style="position:absolute;left:11.8px;top:-11px" width="14" height="14"><g fill="#a2a2a6"><rect x="0" y="0" width="3.3" height="3.3" rx="0.6"/><rect x="5" y="0" width="3.3" height="3.3" rx="0.6"/><rect x="10" y="0" width="3.3" height="3.3" rx="0.6"/><rect x="0" y="5" width="3.3" height="3.3" rx="0.6"/><rect x="10" y="5" width="3.3" height="3.3" rx="0.6"/><rect x="0" y="10" width="3.3" height="3.3" rx="0.6"/><rect x="5" y="10" width="3.3" height="3.3" rx="0.6"/><rect x="10" y="10" width="3.3" height="3.3" rx="0.6"/></g></svg></span><span style="color:#c6c6ca">{</span></div>
<div class="m" style="left:1697.56px;top:727px;font-size:15.4px;"><span style="color:#75bfff">background-position</span><span style="color:#c6c6ca">:</span><span style="display:inline-block;width:20.7px;height:1px;position:relative"><svg style="position:absolute;left:8.7px;top:-11.5px" width="8" height="12"><polygon points="0,0 7.3,5.8 0,11.6" fill="#8f8f93"/></svg></span><span style="color:#ff7de9">2px center</span><span style="color:#c6c6ca">;</span></div>
<div class="m" style="left:1697.56px;top:749px;font-size:15.4px;"><span style="color:#75bfff">padding-left</span><span style="color:#c6c6ca">: </span><span style="color:#ff7de9">20px</span><span style="color:#c6c6ca">;</span></div>
<div class="m" style="left:1697.56px;top:770px;font-size:15.4px;"><span style="color:#75bfff">padding-right</span><span style="color:#c6c6ca">: </span><span style="color:#ff7de9">20px</span><span style="color:#c6c6ca">;</span></div>
<div class="m" style="left:1660.60px;top:788px;font-size:15.4px;"><span style="color:#c6c6ca">}</span></div>
<div style="position:absolute;left:1655px;top:814px;width:752px;height:1px;background:#38383d"></div>
<div class="m" style="left:1660.60px;top:813px;font-size:15.4px;"><span style="color:#c6c6ca">input[type=&quot;text&quot;].xtree-finder</span><span style="display:inline-block;width:36.9px;height:1px;position:relative"><svg style="position:absolute;left:11.8px;top:-11px" width="14" height="14"><g fill="#a2a2a6"><rect x="0" y="0" width="3.3" height="3.3" rx="0.6"/><rect x="5" y="0" width="3.3" height="3.3" rx="0.6"/><rect x="10" y="0" width="3.3" height="3.3" rx="0.6"/><rect x="0" y="5" width="3.3" height="3.3" rx="0.6"/><rect x="10" y="5" width="3.3" height="3.3" rx="0.6"/><rect x="0" y="10" width="3.3" height="3.3" rx="0.6"/><rect x="5" y="10" width="3.3" height="3.3" rx="0.6"/><rect x="10" y="10" width="3.3" height="3.3" rx="0.6"/></g></svg></span><span style="color:#c6c6ca">{</span></div>
<div class="m" style="left:1697.56px;top:837px;font-size:15.4px;"><span style="color:#75bfff">background-image</span><span style="color:#c6c6ca">: </span><span style="color:#ff7de9">url(&quot;</span><span style="color:#b98eff;text-decoration:underline;text-underline-offset:2px">/xwiki/resources/icons/xwiki/search.png?cache-</span></div>
<div class="m" style="left:1712.81px;top:858px;font-size:15.4px;"><span style="color:#b98eff;text-decoration:underline;text-underline-offset:2px">version=1753451930000</span><span style="color:#ff7de9">&quot;);</span></div>
<div class="m" style="left:1697.56px;top:878px;font-size:15.4px;"><span style="color:#75bfff">background-repeat</span><span style="color:#c6c6ca">: </span><span style="color:#ff7de9">no-repeat</span><span style="color:#c6c6ca">;</span></div>
<div class="m" style="left:1697.56px;top:899px;font-size:15.4px;"><span style="color:#75bfff">margin</span><span style="color:#c6c6ca">:</span><span style="display:inline-block;width:20.7px;height:1px;position:relative"><svg style="position:absolute;left:8.7px;top:-11.5px" width="8" height="12"><polygon points="0,0 7.3,5.8 0,11.6" fill="#8f8f93"/></svg></span><span style="color:#ff7de9">.5em 0</span><span style="color:#c6c6ca">;</span></div>
<div class="m" style="left:1697.56px;top:919px;font-size:15.4px;"><span style="color:#75bfff">width</span><span style="color:#c6c6ca">: </span><span style="color:#ff7de9">100%</span><span style="color:#c6c6ca">;</span></div>
<div class="m" style="left:1660.60px;top:938px;font-size:15.4px;"><span style="color:#c6c6ca">}</span></div>
<div style="position:absolute;left:1655px;top:965px;width:752px;height:1px;background:#38383d"></div>
</body></html>
